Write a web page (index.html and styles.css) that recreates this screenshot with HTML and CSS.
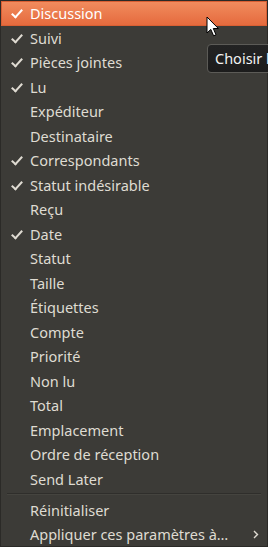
FILE: index.html
```html
<!DOCTYPE html>
<html lang="fr">
<head>
    <meta charset="UTF-8">
    <meta name="viewport" content="width=device-width, initial-scale=1.0">
    <title>Colonnes</title>
    <link rel="stylesheet" href="styles.css">
</head>
<body>
    <ul class="menu">
        <li class="item checked active">Discussion</li>
        <li class="item checked">Suivi</li>
        <li class="item checked">Pièces jointes</li>
        <li class="item checked">Lu</li>
        <li class="item">Expéditeur</li>
        <li class="item">Destinataire</li>
        <li class="item checked">Correspondants</li>
        <li class="item checked">Statut indésirable</li>
        <li class="item">Reçu</li>
        <li class="item checked">Date</li>
        <li class="item">Statut</li>
        <li class="item">Taille</li>
        <li class="item">Étiquettes</li>
        <li class="item">Compte</li>
        <li class="item">Priorité</li>
        <li class="item">Non lu</li>
        <li class="item">Total</li>
        <li class="item">Emplacement</li>
        <li class="item">Ordre de réception</li>
        <li class="item">Send Later</li>
        <li class="separator"></li>
        <li class="item">Réinitialiser</li>
        <li class="item submenu">Appliquer ces paramètres à…
            <svg class="arrow" width="6" height="9" viewBox="0 0 6 9"><path d="M1 1 L4.5 4.5 L1 8" fill="none" stroke="#dfdbd2" stroke-width="1.4"/></svg>
        </li>
    </ul>

    <div class="tooltip">Choisir les colonnes à afficher</div>

    <svg class="cursor" width="14" height="22" viewBox="0 0 14 22">
        <path d="M1 1 L1 17 L4.8 13.4 L7.6 19.8 L10 18.8 L7.3 12.5 L12.4 12.5 Z" fill="#fff" stroke="#000" stroke-width="1" stroke-linejoin="round"/>
    </svg>
</body>
</html>
```

FILE: styles.css
```css
body {
    margin: 0;
    background-color: #3c3b37;
    font-family: "Noto Sans", "DejaVu Sans", sans-serif;
    font-size: 14.5px;
    overflow: hidden;
}
.menu {
    list-style: none;
    margin: 0;
    padding: 0;
    height: 545px;
    border: 1px solid #2b2a27;
    background-color: #3c3b37;
    color: #dfdbd2;
}
.item {
    position: relative;
    height: 24.5px;
    line-height: 24.5px;
    padding-left: 29px;
    white-space: nowrap;
}
.item.checked::before {
    content: "";
    position: absolute;
    left: 13px;
    top: 6px;
    width: 4px;
    height: 9px;
    border-right: 2.2px solid #dfdbd2;
    border-bottom: 2.2px solid #dfdbd2;
    transform: rotate(42deg);
}
.item.active {
    background: linear-gradient(#f28d5f, #e4693c);
    color: #ffffff;
    box-shadow: inset 0 0 0 1px #d95f33;
}
.item.active::before {
    border-color: #ffffff;
}
.separator {
    height: 6.75px;
    display: flex;
    align-items: center;
    padding: 0 6px;
}
.separator::before {
    content: "";
    flex: 1;
    height: 1px;
    background-color: #2f2e2b;
    border-bottom: 1px solid #45443f;
}
.arrow {
    position: absolute;
    right: 8px;
    top: 8px;
}
.tooltip {
    position: absolute;
    left: 207px;
    top: 44px;
    height: 27px;
    line-height: 27px;
    padding: 0 7px;
    border: 1px solid #5c5b57;
    border-radius: 4px;
    background: linear-gradient(#232323, #1c1c1c);
    color: #f2f2f2;
    white-space: nowrap;
    font-size: 14.5px;
}
.cursor {
    position: absolute;
    left: 206px;
    top: 16px;
}
```
